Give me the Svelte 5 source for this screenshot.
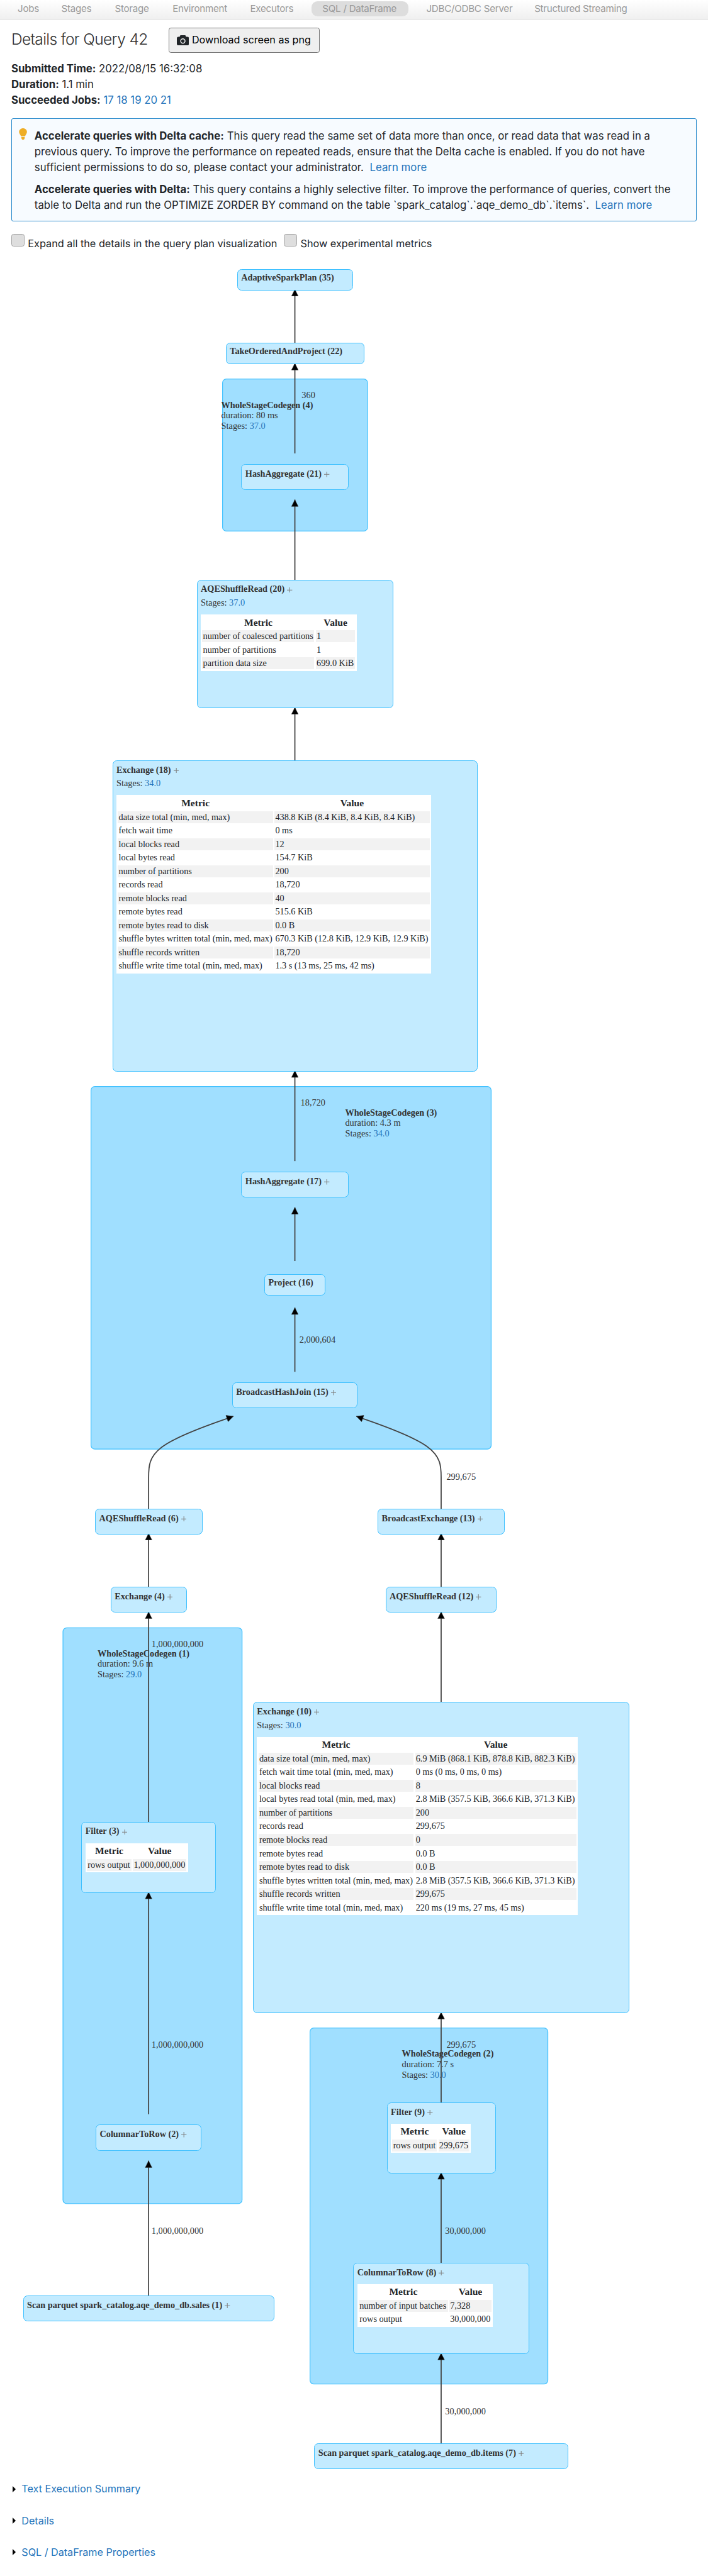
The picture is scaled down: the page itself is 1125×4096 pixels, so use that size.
<script>
  const tabs = [
    { label: 'Jobs', w: 56 },
    { label: 'Stages', w: 82 },
    { label: 'Storage', w: 93.5 },
    { label: 'Environment', w: 146 },
    { label: 'Executors', w: 117 },
    { label: 'SQL / DataFrame', w: 199, active: true },
    { label: 'JDBC/ODBC Server', w: 227 },
    { label: 'Structured Streaming', w: 254 }
  ];
  const jobs = [17, 18, 19, 20, 21];
  const sections = ['Text Execution Summary', 'Details', 'SQL / DataFrame Properties'];

  // The plan canvas starts at this page offset; coordinates below are page coordinates.
  const top = 680;

  const clusters = [
    { x: 591, y: 1007, w: 385, h: 404, tx: 587.5, ty: 1083.6, name: 'WholeStageCodegen (4)', duration: '80 ms', stage: '37.0' },
    { x: 241.7, y: 2887, w: 1062.5, h: 963.4, tx: 916.5, ty: 2963.6, name: 'WholeStageCodegen (3)', duration: '4.3 m', stage: '34.0' },
    { x: 167.2, y: 4325.3, w: 475.6, h: 1530, tx: 259, ty: 4401, name: 'WholeStageCodegen (1)', duration: '9.6 m', stage: '29.0' },
    { x: 823.2, y: 5388.7, w: 631.6, h: 946, tx: 1067, ty: 5465, name: 'WholeStageCodegen (2)', duration: '7.7 s', stage: '30.0' }
  ];

  const straight = (x, from, to) => `M${x} ${from}L${x} ${to}`;

  // Cubic B-spline through four control points, straight at both ends.
  function spline(p) {
    const mix = (a, b, c, ka, kb, kc, d) =>
      [0, 1].map((i) => (a[i] * ka + b[i] * kb + c[i] * kc) / d).join(' ');
    const [a, b, c, d] = p;
    return `M${a.join(' ')}L${mix(a, b, c, 5, 1, 0, 6)}` +
      `C${mix(a, b, c, 2, 1, 0, 3)} ${mix(a, b, c, 1, 2, 0, 3)} ${mix(a, b, c, 1, 4, 1, 6)}` +
      `C${mix(b, c, d, 2, 1, 0, 3)} ${mix(b, c, d, 1, 2, 0, 3)} ${mix(b, c, d, 1, 4, 1, 6)}` +
      `C${mix(c, d, d, 2, 1, 0, 3)} ${mix(c, d, d, 1, 2, 0, 3)} ${mix(c, d, d, 1, 5, 0, 6)}` +
      `L${d.join(' ')}`;
  }

  const edges = [
    straight(783, 912, 768.6),
    straight(783, 1204.6, 965),
    straight(783, 1542, 1327.5),
    straight(783, 2022, 1879.5),
    straight(783, 3085, 2844.6),
    straight(783, 3350.5, 3208),
    straight(783, 3645, 3474.4),
    spline([[394.6, 4010], [394.6, 3925], [394.6, 3843], [619.8, 3763.2]]),
    spline([[1171.4, 4010], [1171.4, 3925], [1171.4, 3843], [946.2, 3763.2]]),
    straight(394.6, 4218, 4074),
    straight(1171.4, 4218, 4074),
    straight(394.6, 4842, 4282.6),
    straight(1171.4, 4524, 4282.6),
    straight(394.6, 5617.6, 5027.2),
    straight(394.6, 6101, 5741.2),
    straight(1171.4, 5588, 5346.4),
    straight(1171.4, 6014, 5772.4),
    straight(1171.4, 6494, 6252.4)
  ];

  const counts = [
    [801, 1058, '360'],
    [798, 2937.6, '18,720'],
    [795, 3567.6, '2,000,604'],
    [1185.5, 3932.5, '299,675'],
    [402.3, 4376.4, '1,000,000,000'],
    [402.3, 5440.4, '1,000,000,000'],
    [402.3, 5935.8, '1,000,000,000'],
    [1185.5, 5440.4, '299,675'],
    [1182, 5936, '30,000,000'],
    [1182, 6416, '30,000,000']
  ];

  const nodes = [
    { x: 629.5, y: 714.7, w: 307.5, h: 56.6, name: 'AdaptiveSparkPlan (35)', plain: true },
    { x: 599.5, y: 910.3, w: 367.5, h: 57, name: 'TakeOrderedAndProject (22)', plain: true },
    { x: 640.6, y: 1233.6, w: 285, h: 69, name: 'HashAggregate (21)' },
    {
      x: 522.3, y: 1540, w: 521.6, h: 342, name: 'AQEShuffleRead (20)', stage: '37.0', cols: [297.5, 104.5],
      rows: [['number of coalesced partitions', '1'], ['number of partitions', '1'], ['partition data size', '699.0 KiB']]
    },
    {
      x: 298.3, y: 2020.2, w: 969.8, h: 827, name: 'Exchange (18)', stage: '34.0', cols: [411.8, 411.8],
      rows: [
        ['data size total (min, med, max)', '438.8 KiB (8.4 KiB, 8.4 KiB, 8.4 KiB)'],
        ['fetch wait time', '0 ms'],
        ['local blocks read', '12'],
        ['local bytes read', '154.7 KiB'],
        ['number of partitions', '200'],
        ['records read', '18,720'],
        ['remote blocks read', '40'],
        ['remote bytes read', '515.6 KiB'],
        ['remote bytes read to disk', '0.0 B'],
        ['shuffle bytes written total (min, med, max)', '670.3 KiB (12.8 KiB, 12.9 KiB, 12.9 KiB)'],
        ['shuffle records written', '18,720'],
        ['shuffle write time total (min, med, max)', '1.3 s (13 ms, 25 ms, 42 ms)']
      ]
    },
    { x: 640.6, y: 3113.6, w: 285, h: 69, name: 'HashAggregate (17)' },
    { x: 701.8, y: 3385, w: 163, h: 57, name: 'Project (16)', plain: true },
    { x: 616.2, y: 3673.3, w: 333.6, h: 69, name: 'BroadcastHashJoin (15)' },
    { x: 252.4, y: 4008.4, w: 285, h: 69, name: 'AQEShuffleRead (6)' },
    { x: 1002.8, y: 4008.4, w: 337.4, h: 69, name: 'BroadcastExchange (13)' },
    { x: 293.6, y: 4216.4, w: 203, h: 69, name: 'Exchange (4)' },
    { x: 1023.6, y: 4216.4, w: 295.6, h: 69, name: 'AQEShuffleRead (12)' },
    {
      x: 671.5, y: 4522.2, w: 1000, h: 827, name: 'Exchange (10)', stage: '30.0', cols: [411.8, 428.4],
      rows: [
        ['data size total (min, med, max)', '6.9 MiB (868.1 KiB, 878.8 KiB, 882.3 KiB)'],
        ['fetch wait time total (min, med, max)', '0 ms (0 ms, 0 ms, 0 ms)'],
        ['local blocks read', '8'],
        ['local bytes read total (min, med, max)', '2.8 MiB (357.5 KiB, 366.6 KiB, 371.3 KiB)'],
        ['number of partitions', '200'],
        ['records read', '299,675'],
        ['remote blocks read', '0'],
        ['remote bytes read', '0.0 B'],
        ['remote bytes read to disk', '0.0 B'],
        ['shuffle bytes written total (min, med, max)', '2.8 MiB (357.5 KiB, 366.6 KiB, 371.3 KiB)'],
        ['shuffle records written', '299,675'],
        ['shuffle write time total (min, med, max)', '220 ms (19 ms, 27 ms, 45 ms)']
      ]
    },
    { x: 215.8, y: 4840.4, w: 358.2, h: 189, name: 'Filter (3)', cols: [118.4, 142], rows: [['rows output', '1,000,000,000']] },
    { x: 254, y: 5645.6, w: 281.6, h: 69.4, name: 'ColumnarToRow (2)' },
    { x: 61, y: 6099.6, w: 668, h: 69, name: 'Scan parquet spark_catalog.aqe_demo_db.sales (1)' },
    { x: 1027, y: 5586, w: 289.2, h: 189, name: 'Filter (9)', cols: [118.4, 82], rows: [['rows output', '299,675']] },
    {
      x: 937.8, y: 6012.2, w: 467.6, h: 242.6, name: 'ColumnarToRow (8)', cols: [236.6, 112],
      rows: [['number of input batches', '7,328'], ['rows output', '30,000,000']]
    },
    { x: 834.4, y: 6492, w: 674, h: 69, name: 'Scan parquet spark_catalog.aqe_demo_db.items (7)' }
  ];
</script>

<div class="page">
  <nav>
    {#each tabs as tab}
      <a class="tab" class:active={tab.active} style:width="{tab.w}px">{tab.label}</a>
    {/each}
  </nav>

  <main>
    <header>
      <h1>Details for Query 42</h1>
      <button>
        <svg class="camera" viewBox="0 0 32 27">
          <path fill="#212529" fill-rule="evenodd" d="M10.5 0h11a2 2 0 0 1 2 1.500L24.500 4H28a4 4 0 0 1 4 4v15a4 4 0 0 1-4 4H4a4 4 0 0 1-4-4V8a4 4 0 0 1 4-4h3.500l1-2.500a2 2 0 0 1 2-1.500zM16 8.500a7 7 0 1 0 0 14a7 7 0 0 0 0-14zM16 11a4.500 4.500 0 1 1 0 9a4.500 4.500 0 0 1 0-9z" />
        </svg>
        <span>Download screen as png</span>
      </button>
    </header>

    <div class="summary">
      <div><b>Submitted Time:</b> 2022/08/15 16:32:08</div>
      <div><b>Duration:</b> 1.1 min</div>
      <div><b>Succeeded Jobs:</b>{#each jobs as job}{' '}<a>{job}</a>{/each}</div>
    </div>

    <aside>
      <svg class="bulb" viewBox="0 0 22 30">
        <path fill="#eead26" d="M11 0c6 0 10.500 4.300 10.500 9.800 0 4.500-3.500 6.700-5 11.700h-11C4 16.500.5 14.300.5 9.800.5 4.300 5 0 11 0zM6.500 23.500h9v3L13.500 30h-5l-2-3.500z" />
      </svg>
      <div class="tips">
        <p>
          <b>Accelerate queries with Delta cache:</b> This query read the same set of data more than once, or read data that was read in a<br />
          previous query. To improve the performance on repeated reads, ensure that the Delta cache is enabled. If you do not have<br />
          sufficient permissions to do so, please contact your administrator.&nbsp; <a>Learn more</a>
        </p>
        <p>
          <b>Accelerate queries with Delta:</b> This query contains a highly selective filter. To improve the performance of queries, convert the<br />
          table to Delta and run the OPTIMIZE ZORDER BY command on the table `spark_catalog`.`aqe_demo_db`.`items`.&nbsp; <a>Learn more</a>
        </p>
      </div>
    </aside>

    <div class="options">
      <i class="box"></i><span class="expand">Expand all the details in the query plan visualization</span>
      <i class="box"></i><span>Show experimental metrics</span>
    </div>
  </main>

  <div class="plan">
    <svg class="graph" viewBox="0 {top} 1880 5892">
      <defs>
        <marker id="head" markerUnits="userSpaceOnUse" markerWidth="20" markerHeight="20" refX="19" refY="10" orient="auto">
          <path d="M1 1.200L18.500 10L1 18.800z" fill="#000" stroke="#333" />
        </marker>
      </defs>
      {#each clusters as c}
        <rect class="cluster" x={c.x} y={c.y} width={c.w} height={c.h} rx="10" />
        <text class="name" x={c.tx} y={c.ty}>{c.name}</text>
        <text x={c.tx} y={c.ty + 27.8}>duration: {c.duration}</text>
        <text x={c.tx} y={c.ty + 55.6}>Stages: <tspan class="link">{c.stage}</tspan></text>
      {/each}
      {#each edges as d}
        <path class="edge" {d} marker-end="url(#head)" />
      {/each}
      {#each counts as [x, y, n]}
        <text {x} {y}>{n}</text>
      {/each}
    </svg>

    {#each nodes as n}
      <div class="node" class:plain={n.plain} style:left="{n.x}px" style:top="{n.y - top}px" style:width="{n.w}px" style:height="{n.h}px">
        <div class="title"><b>{n.name}</b>{#if !n.plain}<svg class="plus" viewBox="0 0 14 14"><path d="M7 0V14M0 7H14" /></svg>{/if}</div>
        {#if n.stage}<div>Stages: <a>{n.stage}</a></div>{/if}
        {#if n.rows}
          <div class="metrics" style:grid-template-columns="{n.cols[0]}px {n.cols[1]}px">
            <b>Metric</b><b>Value</b>
            {#each n.rows as row, i}
              {#each row as cell}
                <span class:striped={i % 2 === 0}>{cell}</span>
              {/each}
            {/each}
          </div>
        {/if}
      </div>
    {/each}
  </div>

  <footer>
    {#each sections as s}
      <div class="section"><i class="caret"></i><a>{s}</a></div>
    {/each}
  </footer>
</div>

<style>
  :global(body) { background: #fff; overflow: hidden; }
  .page {
    zoom: 0.598404;
    width: 1880px;
    height: 6844px;
    overflow: hidden;
    background: #fff;
    color: #212529;
    font-family: Inter, "Liberation Sans", sans-serif;
    font-size: 28px;
    line-height: 42px;
    white-space: nowrap;
  }
  a { color: #2374bb; }
  nav {
    box-sizing: border-box;
    height: 52px;
    padding: 4px 0 0 18px;
    display: flex;
    align-items: flex-start;
    gap: 2px;
    border-bottom: 2px solid #d4d4d4;
    background: linear-gradient(#fff, #f0f0f0);
  }
  .tab {
    flex: none;
    padding: 0 29px;
    height: 40px;
    line-height: 41px;
    border-radius: 16px;
    color: #999;
    font-size: 25.3px;
    letter-spacing: -0.4px;
  }
  .active { background: #ddd; margin: 0 17px 0 15px; }
  main { padding: 0 30px; height: 628px; }
  header { display: flex; padding-top: 21px; height: 67px; }
  h1 {
    margin: 0;
    width: 418px;
    padding-top: 8px;
    color: #333;
    font-size: 41px;
    line-height: 48px;
    font-weight: 300;
    letter-spacing: -1.05px;
  }
  button {
    box-sizing: border-box;
    width: 401px;
    height: 67px;
    padding: 0 20px;
    display: flex;
    align-items: center;
    gap: 8px;
    border: 2px solid #767676;
    border-radius: 6px;
    background: #efefef;
    color: #000;
    font: 27px/42px Inter, sans-serif;
    white-space: nowrap;
  }
  .camera { width: 32px; height: 27px; flex: none; }
  .summary { margin: 22px 0 27px; height: 126px; }
  aside {
    box-sizing: border-box;
    height: 273px;
    display: flex;
    gap: 20px;
    padding: 24px 20px 0 18px;
    border: 2px solid #2a8bcc;
    border-radius: 5px;
    background: #f7fbff;
  }
  .bulb { width: 22px; height: 30px; flex: none; }
  .tips { margin-top: -8px; letter-spacing: 0.05px; }
  p { margin: 8px 0 16px; }
  .options { display: flex; padding-top: 33px; font-size: 27.2px; }
  .box {
    box-sizing: border-box;
    width: 35px;
    height: 35px;
    margin-right: 9px;
    border: 2px solid #a5a5a5;
    border-radius: 6px;
    background: #dedede;
  }
  .options span { line-height: 51px; }
  .expand { width: 680px; }
  .plan {
    position: relative;
    height: 5892px;
    color: #333;
    font-family: "Liberation Serif", serif;
    font-size: 24px;
    line-height: 36px;
  }
  .graph { display: block; width: 1880px; height: 5892px; }
  .graph text { fill: #333; font-size: 24px; }
  .graph .name { font-weight: bold; font-size: 23.8px; }
  .graph .link { fill: #2374bb; }
  .cluster { fill: #a0dfff; stroke: #3ec0ff; stroke-width: 2; }
  .edge { fill: none; stroke: #444; stroke-width: 3; }
  .node {
    position: absolute;
    box-sizing: border-box;
    padding: 6.5px 0 0 9.2px;
    border: 2px solid #3ec0ff;
    border-radius: 11px;
    background: #c3ebff;
  }
  .plain { padding-top: 4.5px; }
  .title { font-size: 23.8px; height: 36px; display: flex; align-items: center; }
  .plus { width: 14px; height: 14px; margin: 2px 0 0 7px; }
  .plus path { stroke: #808080; stroke-width: 1.8; }
  .metrics {
    display: grid;
    width: max-content;
    margin-top: 12.8px;
    padding: 4px;
    gap: 4px;
    grid-template-rows: 34px;
    grid-auto-rows: 32px;
    background: #fff;
    color: #212529;
    font-size: 23.8px;
  }
  .metrics b { line-height: 34px; font-size: 26px; text-align: center; }
  .metrics span { padding: 0 2px; line-height: 32px; }
  .metrics .striped { background: #f2f2f2; }
  footer { padding: 0 34px; }
  .section { display: flex; align-items: center; height: 84px; }
  .section a { font-size: 27px; }
  .caret {
    margin-right: 15px;
    border-left: 10px solid #000;
    border-top: 10px solid transparent;
    border-bottom: 10px solid transparent;
  }
</style>
